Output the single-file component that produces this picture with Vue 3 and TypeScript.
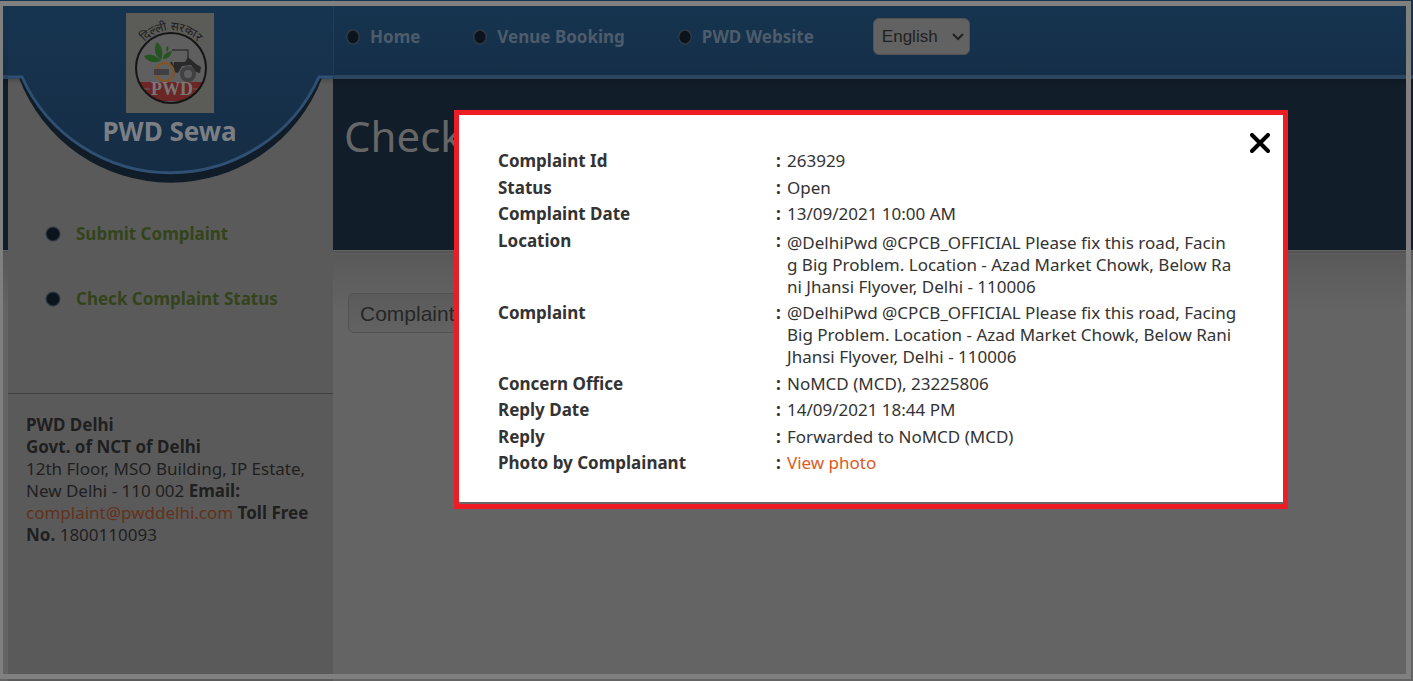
<script setup lang="ts">
import { ref } from 'vue'

interface Row {
  label: string
  lines: string[]
  link?: boolean
  inset?: boolean
}

const language = ref('English')
const query = ref('')
const open = ref(true)

const menu: string[] = ['Home', 'Venue Booking', 'PWD Website']
const sideLinks: string[] = ['Submit Complaint', 'Check Complaint Status']

const rows: Row[] = [
  { label: 'Complaint Id', lines: ['263929'] },
  { label: 'Status', lines: ['Open'] },
  { label: 'Complaint Date', lines: ['13/09/2021 10:00 AM'] },
  {
    label: 'Location',
    inset: true,
    lines: [
      '@DelhiPwd @CPCB_OFFICIAL Please fix this road, Facin',
      'g Big Problem. Location - Azad Market Chowk, Below Ra',
      'ni Jhansi Flyover, Delhi - 110006',
    ],
  },
  {
    label: 'Complaint',
    lines: [
      '@DelhiPwd @CPCB_OFFICIAL Please fix this road, Facing',
      'Big Problem. Location - Azad Market Chowk, Below Rani',
      'Jhansi Flyover, Delhi - 110006',
    ],
  },
  { label: 'Concern Office', lines: ['NoMCD (MCD), 23225806'] },
  { label: 'Reply Date', lines: ['14/09/2021 18:44 PM'] },
  { label: 'Reply', lines: ['Forwarded to NoMCD (MCD)'] },
  { label: 'Photo by Complainant', lines: ['View photo'], link: true },
]
</script>

<template>
  <div class="page">
    <aside class="sidebar">
      <div class="brand">
        <svg class="bowl" viewBox="0 0 325 190" aria-hidden="true">
          <defs>
            <linearGradient id="bowlFill" x1="0" y1="0" x2="0" y2="1">
              <stop offset="0" stop-color="#163551" />
              <stop offset="0.6" stop-color="#17304a" />
              <stop offset="1" stop-color="#152d44" />
            </linearGradient>
          </defs>
          <path d="M11 78A162 162 0 0 0 314 78Z" fill="#101c27" />
          <path d="M0 0H325V77H311A163 163 0 0 1 14 77H0Z" fill="url(#bowlFill)" />
          <path d="M-5 77H14A163 163 0 0 0 311 77H330" fill="none" stroke="#2f4f73" stroke-width="3" />
        </svg>
        <svg class="logo" viewBox="0 0 88 100" role="img" aria-label="PWD Delhi">
          <rect width="88" height="100" fill="#5b5b58" />
          <defs>
            <path id="arch" d="M14 35A36 36 0 0 1 76 35" />
            <clipPath id="disc"><circle cx="45" cy="55" r="35" /></clipPath>
          </defs>
          <text class="arch-text"><textPath href="#arch" startOffset="50%" text-anchor="middle">दिल्ली सरकार</textPath></text>
          <circle cx="45" cy="55" r="35" fill="#5f5f5f" />
          <g clip-path="url(#disc)">
            <rect x="9" y="69" width="72" height="16" fill="#6d2626" />
            <path d="M9 76H24M67 76H81M9 85.500H81" stroke="#62625f" stroke-width="1" />
            <path d="M30 86.500H81" stroke="#6d2626" stroke-width="3" />
          </g>
          <text class="logo-text" x="46" y="82" text-anchor="middle">PWD</text>
          <path d="M31 29C36 33 38 40 35 47C29 43 27 36 31 29Z" fill="#24551f" />
          <path d="M18 43C25 40 31 43 35 48C29 50 22 50 18 43Z" fill="#24551f" />
          <path d="M37 46C37 41 41 39 46 38C45 43 42 46 37 46Z" fill="#24551f" />
          <path d="M41 33C43 34 43 37 41 39C40 37 40 35 41 33Z" fill="#24551f" />
          <path d="M46 37H62V47" fill="none" stroke="#333" stroke-width="1.500" />
          <path d="M48 49H59L62 44L70 51L75 54L74 60L70 59L65 52L56 53L52 60L48 59Z" fill="#292929" />
          <path d="M45 49L49 57" stroke="#292929" stroke-width="2" />
          <circle cx="39" cy="59" r="9" fill="none" stroke="#86531d" stroke-width="2" />
          <rect x="28" y="56" width="15" height="6" fill="#404043" />
          <circle cx="62" cy="61" r="6" fill="none" stroke="#404043" stroke-width="4" />
          <circle cx="45" cy="55" r="35" fill="none" stroke="#151515" stroke-width="2" />
        </svg>
        <strong class="brand-name">PWD Sewa</strong>
      </div>
      <nav class="side-nav" aria-label="Complaints">
        <a v-for="item in sideLinks" :key="item" href="#" class="side-link">
          <span class="dot"></span>{{ item }}
        </a>
      </nav>
      <address class="contact">
        <b>PWD Delhi<br />Govt. of NCT of Delhi</b><br />
        12th Floor, MSO Building, IP Estate,<br />
        New Delhi - 110 002 <b>Email:</b><br />
        <a href="mailto:complaint@pwddelhi.com">complaint@pwddelhi.com</a> <b>Toll Free<br />No.</b> 1800110093
      </address>
    </aside>

    <div class="content">
      <header class="topbar">
        <nav class="menu" aria-label="Main">
          <a v-for="item in menu" :key="item" href="#" class="menu-link">
            <span class="dot"></span>{{ item }}
          </a>
        </nav>
        <span class="select-wrap">
          <select v-model="language" class="language" aria-label="Language">
            <option>English</option>
            <option>Hindi</option>
          </select>
          <svg class="chevron" viewBox="0 0 12 8" aria-hidden="true">
            <path d="M1 1L6 6L11 1" fill="none" stroke="#212121" stroke-width="2" />
          </svg>
        </span>
      </header>
      <div class="banner"><h1>Check</h1></div>
      <main class="main">
        <input v-model="query" class="query" type="text" placeholder="Complaint" aria-label="Complaint" />
      </main>
    </div>

    <div class="frame"></div>

    <section v-if="open" class="dialog" role="dialog" aria-label="Complaint details">
      <button class="close" type="button" aria-label="Close" @click="open = false">
        <svg viewBox="0 0 20 20" width="20" height="20" aria-hidden="true">
          <path d="M2 2L18 18M18 2L2 18" stroke="#000" stroke-width="4" stroke-linecap="round" />
        </svg>
      </button>
      <table class="details">
        <tbody>
          <tr v-for="row in rows" :key="row.label">
            <th scope="row">{{ row.label }}</th>
            <td class="colon">:</td>
            <td :class="{ inset: row.inset }">
              <a v-if="row.link" href="#">{{ row.lines[0] }}</a>
              <template v-else>
                <div v-for="line in row.lines" :key="line">{{ line }}</div>
              </template>
            </td>
          </tr>
        </tbody>
      </table>
    </section>
  </div>
</template>

<style>
body {
  margin: 0;
  background: #646464;
}
</style>

<style scoped>
.page {
  position: relative;
  display: grid;
  grid-template-columns: 325px 1fr;
  box-sizing: border-box;
  min-height: 100vh;
  padding-left: 8px;
  overflow: hidden;
  font-family: Tahoma, "Noto Sans", sans-serif;
  font-size: 17px;
  line-height: 22px;
  color: #333;
  background:
    linear-gradient(#163550, #152e48) 0 0 / 100% 75px no-repeat,
    linear-gradient(#2b4560, #2b4560) 0 75px / 100% 4px no-repeat,
    linear-gradient(#0f1922, #111d28 8px) 0 79px / 100% 171px no-repeat,
    linear-gradient(#646464 1px, #545454 1px, #545454 3px, #5f5f5f 3px, #5f5f5f 4px, #595959 4px, #646464 60px) 0 250px / 100% 60px no-repeat,
    #646464;
}

a {
  text-decoration: none;
}

.sidebar {
  background: linear-gradient(transparent 79px, #4c4c4c 79px, #5a5a5a 84px);
}

.brand {
  position: relative;
  display: flex;
  flex-direction: column;
  align-items: center;
  height: 187px;
  padding: 13px 2px 0 0;
  box-sizing: border-box;
}

.bowl {
  position: absolute;
  top: 0;
  left: 0;
  width: 325px;
  height: 190px;
}

.logo {
  position: relative;
  width: 88px;
  height: 100px;
}

.arch-text {
  font-size: 12px;
  fill: #1d1d1d;
}

.logo-text {
  font-family: "Liberation Serif", serif;
  font-size: 18px;
  font-weight: bold;
  fill: #777;
}

.brand-name {
  position: relative;
  font-size: 26px;
  line-height: 36px;
  color: #7b7f83;
}

.dot {
  flex: none;
  box-sizing: border-box;
  width: 14px;
  height: 16px;
  border-radius: 50%;
  background: radial-gradient(closest-side, #0b131d 70%, #39414a 90%, #39414a00);
}

.side-nav {
  display: flex;
  flex-direction: column;
  gap: 43px;
  height: 207px;
  padding: 36px 0 0 37px;
  box-sizing: border-box;
  border-bottom: 1px solid #424242;
}

.side-link {
  display: flex;
  align-items: center;
  gap: 15px;
  font-weight: bold;
  color: #33441a;
}

.side-link .dot {
  width: 16px;
}

.contact {
  padding: 20px 0 0 18px;
  font-style: normal;
  white-space: nowrap;
  color: #1f1f1f;
}

.contact a {
  color: #63311b;
}

.content {
  min-width: 0;
}

.topbar {
  display: flex;
  height: 79px;
  padding: 18px 0 0 12px;
  box-sizing: border-box;
  border-left: 1px solid #1c3d5b;
}

.menu {
  display: flex;
  gap: 53px;
  height: 37px;
  margin-right: 59px;
}

.menu-link {
  display: flex;
  align-items: center;
  gap: 10px;
  font-weight: bold;
  color: #4d5c6b;
}

.language,
.query {
  border: 1px solid #525252;
  border-radius: 6px;
  font-family: "Liberation Sans", Arial, sans-serif;
  box-sizing: border-box;
}

.select-wrap {
  position: relative;
  height: 37px;
}

.language {
  appearance: none;
  width: 97px;
  height: 37px;
  padding: 0 8px;
  font-size: 17px;
  color: #212121;
  background: #626262;
}

.chevron {
  position: absolute;
  top: 15px;
  right: 6px;
  width: 12px;
  height: 8px;
  pointer-events: none;
}

.banner {
  height: 171px;
  padding: 32px 0 0 11px;
  box-sizing: border-box;
}

h1 {
  margin: 0;
  font-size: 42px;
  font-weight: normal;
  line-height: 50px;
  color: #666;
}

.main {
  padding: 43px 15px 0;
}

.query {
  width: 400px;
  height: 40px;
  padding: 2px 11px 0;
  font-size: 21px;
  background: linear-gradient(#5b5b5b, #626262);
}

.query::placeholder {
  color: #262626;
}

.frame {
  position: absolute;
  inset: 1px 2px 2px -2px;
  border: 5px solid #808080;
  pointer-events: none;
}

.dialog {
  position: absolute;
  top: 110px;
  left: 454px;
  right: 125px;
  box-sizing: border-box;
  padding: 33px 37px 27px;
  border: 5px solid #ee1c25;
  background: #fff;
  box-shadow: inset 0 -2px #686868;
}

.close {
  position: absolute;
  top: 18px;
  right: 13px;
  width: 20px;
  height: 20px;
  padding: 0;
  border: 0;
  background: none;
}

.close svg {
  display: block;
}

.details {
  border-collapse: collapse;
  white-space: nowrap;
}

.details th,
.details td {
  padding: 2px 0 3px;
  text-align: left;
  vertical-align: top;
}

.details tr:nth-child(even) > * {
  padding-bottom: 2px;
}

.details th {
  width: 278px;
  padding-left: 2px;
}

.details .colon {
  width: 11px;
  font-weight: bold;
}

.details .inset {
  padding-top: 4px;
}

.details a {
  color: #dd5a1c;
}
</style>
